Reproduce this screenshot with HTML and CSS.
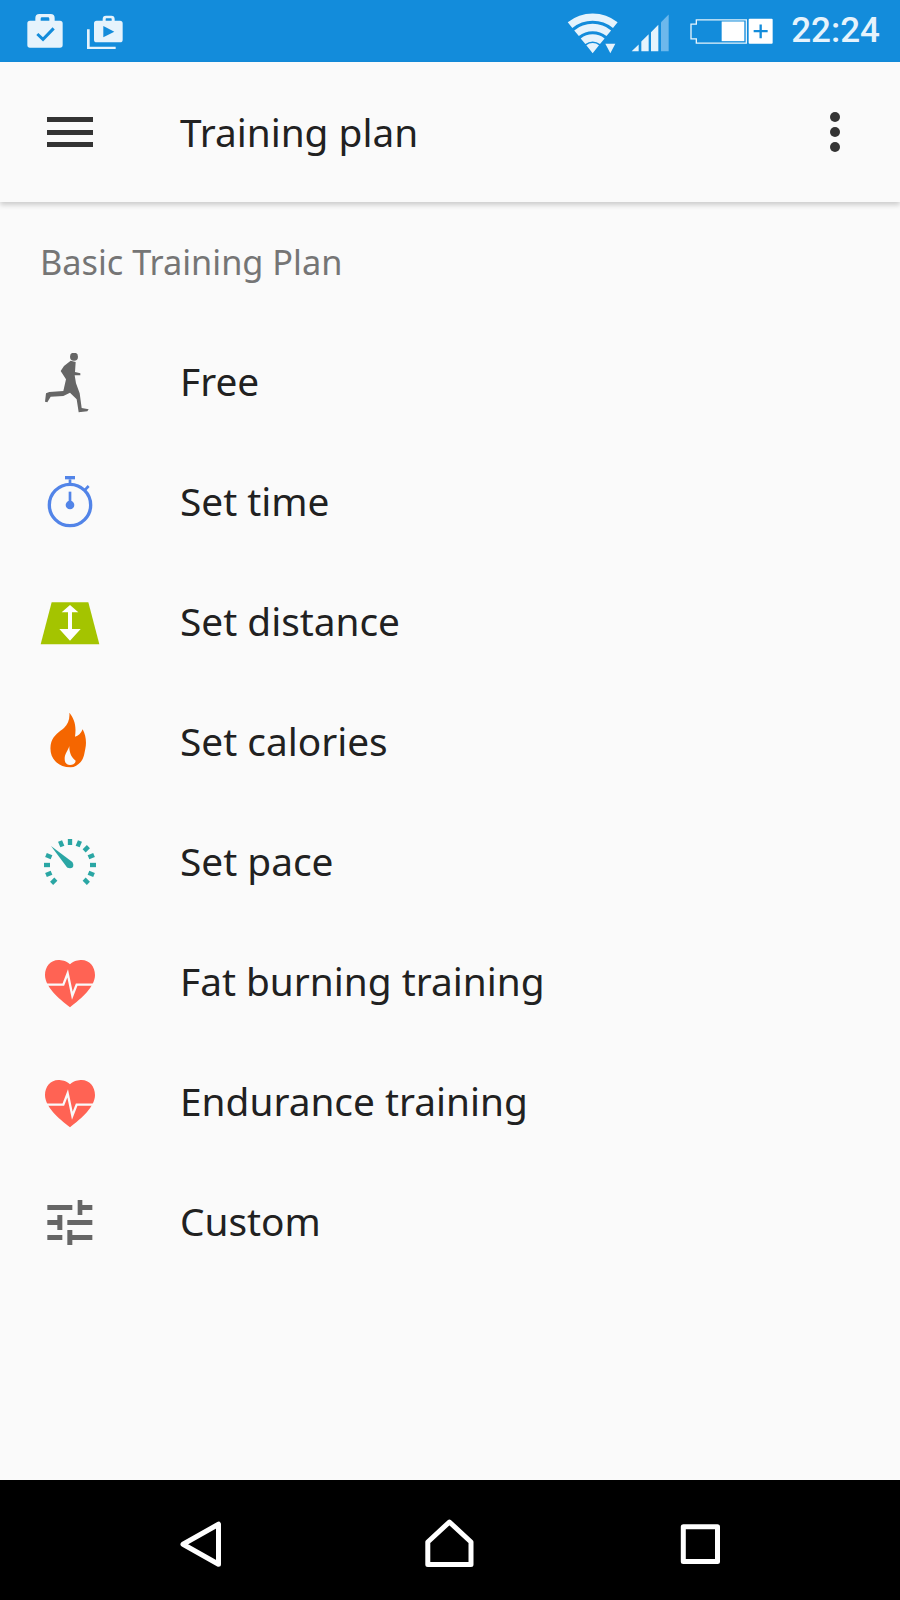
FILE: index.html
```html
<!DOCTYPE html>
<html>
  <head>
    <title>Training plan</title>
    <meta http-equiv="Content-Type" content="text/html; charset=UTF-8"/>
    <link rel="stylesheet" href="styles.css">
  </head>
  <body>
    <div class="status-bar">
      <svg class="status-icon" viewBox="81 39 108 108">
        <path class="status-fill" d="M90 62h16v-8a12 12 0 0 1 12-12h34a12 12 0 0 1 12 12v8h16a8 8 0 0 1 8 8v65a8 8 0 0 1-8 8H90a8 8 0 0 1-8-8V70a8 8 0 0 1 8-8zM122 62h26v-6a4 4 0 0 0-4-4h-18a4 4 0 0 0-4 4z" fill-rule="evenodd"/>
        <path class="status-cut" d="M112 102l17 16 32-33"/>
      </svg>
      <svg class="status-icon" viewBox="261 39 108 108">
        <path class="status-line" d="M265 88v56h82"/>
        <path class="status-fill" d="M290 62h18v-5a10 10 0 0 1 10-10h16a10 10 0 0 1 10 10v5h16a8 8 0 0 1 8 8v49a8 8 0 0 1-8 8h-70a8 8 0 0 1-8-8V70a8 8 0 0 1 8-8zM317 62h18v-5a2 2 0 0 0-2-2h-14a2 2 0 0 0-2 2z" fill-rule="evenodd"/>
        <path class="status-hole" d="M310 78l33 17-33 17z"/>
      </svg>
      <svg class="status-right" viewBox="50 25.5 630 135">
        <g class="wifi">
          <path d="M62.1 74.1A108 108 0 0 1 197.9 74.1"/>
          <path d="M81.6 98.2A77 77 0 0 1 178.4 98.2"/>
          <path d="M101.1 122.3A46 46 0 0 1 158.9 122.3"/>
        </g>
        <path class="status-fill" d="M130 158l-19-24a30 30 0 0 1 38 0zM168 130h30l-15 28z"/>
        <path class="status-fill" d="M247 152l21-20v20zM276 152v-29l22-22v51zM305 152v-57l22-22v79z"/>
        <path class="signal-off" d="M335 152v-87l23-23v110z"/>
        <path class="battery-line" d="M441 58h150v70H441v-13h-16V71h16z"/>
        <rect class="battery-fill" x="517" y="63" width="68" height="59"/>
        <rect class="battery-fill" x="598" y="55" width="72" height="75" rx="3"/>
        <path class="battery-plus" d="M613 92h42M634 72v41"/>
      </svg>
      <span class="clock">22:24</span>
    </div>

    <div class="app-bar">
      <div class="menu-icon"><span></span><span></span><span></span></div>
      <div class="app-title">Training plan</div>
      <div class="more-icon"><span></span><span></span><span></span></div>
    </div>

    <div class="content">
      <div class="section-label">Basic Training Plan</div>

      <div class="row">
        <svg class="row-icon" viewBox="30 39 180 180">
          <circle class="c-runner" cx="132" cy="50" r="12"/>
          <path class="c-runner" d="M122 62L137 66L135 96L151 100L151 106L134 106L138 130L149 160L155 204L176 208L172 214L146 217L140 178L120 158L100 168L62 170L52 187L45 185L48 160L58 156L100 153L108 118L92 93L102 78Z"/>
        </svg>
        <div class="row-text">Free</div>
      </div>

      <div class="row">
        <svg class="row-icon" viewBox="30 399 180 180">
          <circle class="c-watch-line" cx="120" cy="495" r="62"/>
          <rect class="c-watch" x="105" y="408" width="30" height="10"/>
          <rect class="c-watch" x="116" y="418" width="8" height="14"/>
          <path class="c-watch-tick" d="M163 452l13-14"/>
          <rect class="c-watch" x="116" y="455" width="8" height="40"/>
          <circle class="c-watch" cx="120" cy="495" r="13"/>
        </svg>
        <div class="row-text">Set time</div>
      </div>

      <div class="row">
        <svg class="row-icon" viewBox="30 9 180 180">
          <path class="c-road" d="M65 37h110l33 126H32z"/>
          <path class="c-white" d="M120 45l25 22h-19v50h26l-32 35-32-35h26V67H95z"/>
        </svg>
        <div class="row-text">Set distance</div>
      </div>

      <div class="row">
        <svg class="row-icon" viewBox="30 369 180 180">
          <path class="c-flame" d="M118 368c14 18 22 36 17 72 10-2 18-10 23-22 10 18 12 40 8 58-3 14-4 28-14 40-8 9-18 16-30 16-20 0-34-6-46-18-14-14-18-38-12-58 8-22 24-30 38-42 12-12 18-28 16-46z"/>
          <path class="c-white-soft" d="M118 468c-4 14-14 24-14 38 0 12 6 19 16 19s16-5 17-13c-12-8-20-24-19-44z"/>
        </svg>
        <div class="row-text">Set calories</div>
      </div>

      <div class="row">
        <svg class="row-icon" viewBox="30 9 180 180">
          <g class="c-tick">
            <path d="M120 27v18" transform="rotate(-135 120 105)"/>
            <path d="M120 27v18" transform="rotate(-112.5 120 105)"/>
            <path d="M120 27v18" transform="rotate(-90 120 105)"/>
            <path d="M120 27v18" transform="rotate(-67.5 120 105)"/>
            <path d="M120 27v18" transform="rotate(-22.5 120 105)"/>
            <path d="M120 27v18"/>
            <path d="M120 27v18" transform="rotate(22.5 120 105)"/>
            <path d="M120 27v18" transform="rotate(45 120 105)"/>
            <path d="M120 27v18" transform="rotate(67.5 120 105)"/>
            <path d="M120 27v18" transform="rotate(90 120 105)"/>
            <path d="M120 27v18" transform="rotate(112.5 120 105)"/>
            <path d="M120 27v18" transform="rotate(135 120 105)"/>
          </g>
          <path class="c-needle" d="M63 48l65 49-16 16z"/>
          <circle class="c-needle" cx="120" cy="105" r="10"/>
        </svg>
        <div class="row-text">Set pace</div>
      </div>

      <div class="row">
        <svg class="row-icon" viewBox="30 369 180 180">
          <path class="c-heart" d="M120 403C108 392 95 390 85 390C62 390 45 410 45 435C45 470 85 505 120 532C155 505 195 470 195 435C195 410 178 390 155 390C145 390 132 392 120 403Z"/>
          <path class="c-pulse" d="M48 464H100L113 430L127 497L140 464H192"/>
        </svg>
        <div class="row-text">Fat burning training</div>
      </div>

      <div class="row">
        <svg class="row-icon" viewBox="30 9 180 180">
          <path class="c-heart" d="M120 43C108 32 95 30 85 30C62 30 45 50 45 75C45 110 85 145 120 172C155 145 195 110 195 75C195 50 178 30 155 30C145 30 132 32 120 43Z"/>
          <path class="c-pulse" d="M48 104H100L113 70L127 137L140 104H192"/>
        </svg>
        <div class="row-text">Endurance training</div>
      </div>

      <div class="row">
        <svg class="row-icon" viewBox="30 369 180 180">
          <path class="c-slider" d="M52 405h75v15H52zM143 390h14v15h30v15h-30v15h-14zM82 435h15v45H82v-15H52v-15h30zM112 450h75v15h-75zM52 495h45v15H52zM112 480h15v15h60v15h-60v15h-15z"/>
        </svg>
        <div class="row-text">Custom</div>
      </div>
    </div>

    <div class="nav-bar">
      <svg class="nav-icon" viewBox="0 0 50 50"><path d="M8 25.2L43.5 5.2V45.2Z"/></svg>
      <svg class="nav-icon" viewBox="0 0 50 50"><path d="M24.4 3L46 23V45.5H2.8V23Z"/></svg>
      <svg class="nav-icon" viewBox="0 0 50 50"><path d="M8.3 7.8H42.5V42.5H8.3Z"/></svg>
    </div>
  </body>
</html>
```

FILE: styles.css
```css
html, body {
  margin: 0;
  height: 100%;
}

body {
  display: flex;
  flex-direction: column;
  height: 1600px;
  background-color: #fafafa;
  color: #212121;
  font-family: 'Noto Sans', sans-serif;
}

/* status bar */
.status-bar {
  display: flex;
  align-items: center;
  gap: 24px;
  height: 62px;
  padding: 0 20px 0 27px;
  background-color: #138cdb;
}
.status-icon {
  width: 36px;
  height: 36px;
}
.status-right {
  width: 210px;
  height: 45px;
  margin-left: auto;
  margin-right: -9px;
}
.status-fill { fill: #e6f3fc; }
.status-hole { fill: #138cdb; }
.status-cut {
  fill: none;
  stroke: #138cdb;
  stroke-width: 9;
}
.status-line {
  fill: none;
  stroke: #e6f3fc;
  stroke-width: 8;
}
.wifi path {
  fill: none;
  stroke: #e6f3fc;
  stroke-width: 22;
}
.signal-off { fill: #6db8ec; }
.battery-line {
  fill: none;
  stroke: #e6f3fc;
  stroke-width: 4;
}
.battery-fill { fill: #ffffff; }
.battery-plus {
  fill: none;
  stroke: #138cdb;
  stroke-width: 7;
}
.clock {
  color: #e6f3fc;
  font-family: 'Roboto', sans-serif;
  font-size: 35px;
  font-weight: 500;
  line-height: 62px;
}

/* app bar */
.app-bar {
  position: relative;
  display: flex;
  align-items: center;
  height: 140px;
  padding: 0 60px 0 47px;
  background-color: #fafafa;
  box-shadow: 0 3px 5px rgba(0, 0, 0, 0.18);
}
.menu-icon {
  display: flex;
  flex-direction: column;
  gap: 7.5px;
  width: 46px;
}
.menu-icon span {
  height: 5px;
  background-color: #333333;
}
.app-title {
  flex: 1;
  margin-left: 87px;
  font-size: 38.8px;
}
.more-icon {
  display: flex;
  flex-direction: column;
  gap: 5px;
}
.more-icon span {
  width: 10px;
  height: 10px;
  border-radius: 50%;
  background-color: #333333;
}

/* list */
.content {
  flex: 1;
}
.section-label {
  height: 121px;
  padding: 39px 0 0 40px;
  box-sizing: border-box;
  color: #757575;
  font-size: 34.3px;
  line-height: 42px;
}
.row {
  display: flex;
  align-items: center;
  height: 120px;
  padding-left: 40px;
}
.row-icon {
  width: 60px;
  height: 60px;
}
.row-text {
  margin-left: 80px;
  padding-bottom: 4px;
  font-size: 38.8px;
}

/* icon colours */
.c-runner { fill: #666666; }
.c-watch { fill: #5284e8; }
.c-watch-line {
  fill: none;
  stroke: #5284e8;
  stroke-width: 10;
}
.c-watch-tick {
  fill: none;
  stroke: #5284e8;
  stroke-width: 8;
}
.c-road { fill: #a4c400; }
.c-white { fill: #ffffff; }
.c-white-soft { fill: #fafafa; }
.c-flame { fill: #f56600; }
.c-tick path {
  fill: none;
  stroke: #2aa6a4;
  stroke-width: 13;
}
.c-needle { fill: #2aa6a4; }
.c-heart { fill: #ff6354; }
.c-pulse {
  fill: none;
  stroke: #fafafa;
  stroke-width: 7;
}
.c-slider { fill: #666666; }

/* nav bar */
.nav-bar {
  display: flex;
  justify-content: center;
  align-items: center;
  gap: 200px;
  height: 112px;
  padding-top: 8px;
  background-color: #000000;
}
.nav-icon {
  width: 50px;
  height: 50px;
}
.nav-icon path {
  fill: none;
  stroke: #ffffff;
  stroke-width: 5;
  stroke-linejoin: round;
}
```
